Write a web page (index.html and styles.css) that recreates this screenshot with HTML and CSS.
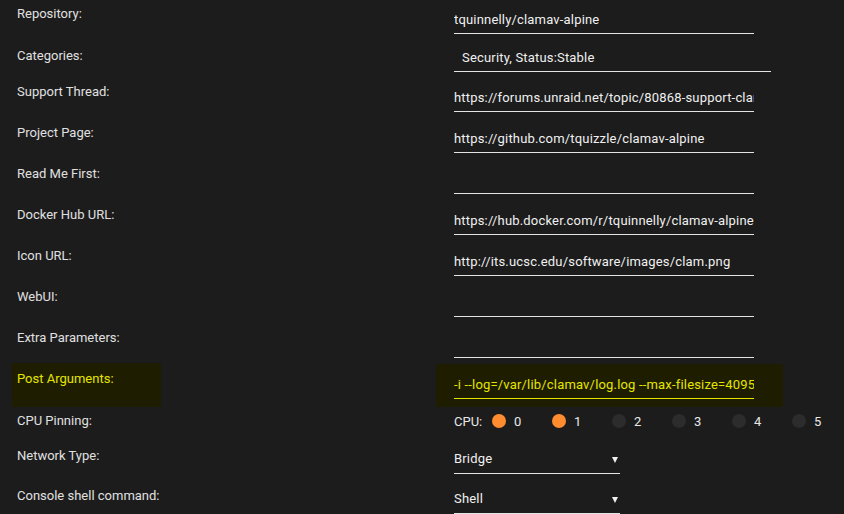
FILE: index.html
```html
<!DOCTYPE html>
<html>
<head>
<meta charset="utf-8">
<link rel="stylesheet" href="styles.css">
</head>
<body>
<div class="form">
  <div class="row row-repo">
    <div class="label">Repository:</div>
    <div class="field"><input class="text" type="text" value="tquinnelly/clamav-alpine"></div>
  </div>
  <div class="row row-cat">
    <div class="label">Categories:</div>
    <div class="field"><input class="text wide" type="text" value="Security, Status:Stable"></div>
  </div>
  <div class="row">
    <div class="label">Support Thread:</div>
    <div class="field"><input class="text" type="text" value="https://forums.unraid.net/topic/80868-support-clamav-alpine/"></div>
  </div>
  <div class="row">
    <div class="label">Project Page:</div>
    <div class="field"><input class="text" type="text" value="https://github.com/tquizzle/clamav-alpine"></div>
  </div>
  <div class="row">
    <div class="label">Read Me First:</div>
    <div class="field"><input class="text" type="text" value=""></div>
  </div>
  <div class="row">
    <div class="label">Docker Hub URL:</div>
    <div class="field"><input class="text" type="text" value="https://hub.docker.com/r/tquinnelly/clamav-alpine"></div>
  </div>
  <div class="row">
    <div class="label">Icon URL:</div>
    <div class="field"><input class="text" type="text" value="http://its.ucsc.edu/software/images/clam.png"></div>
  </div>
  <div class="row">
    <div class="label">WebUI:</div>
    <div class="field"><input class="text" type="text" value=""></div>
  </div>
  <div class="row">
    <div class="label">Extra Parameters:</div>
    <div class="field"><input class="text" type="text" value=""></div>
  </div>
  <div class="row row-hl">
    <div class="label">Post Arguments:</div>
    <div class="field"><input class="text" type="text" value="-i --log=/var/lib/clamav/log.log --max-filesize=4095M --max-scansize=4095M"></div>
  </div>
  <div class="row row-cpu">
    <div class="label">CPU Pinning:</div>
    <div class="field">
      <div class="cpus">
        <span class="cpu-title">CPU:</span>
        <span class="cpu"><span class="dot on"></span><span class="num">0</span></span>
        <span class="cpu"><span class="dot on"></span><span class="num">1</span></span>
        <span class="cpu"><span class="dot"></span><span class="num">2</span></span>
        <span class="cpu"><span class="dot"></span><span class="num">3</span></span>
        <span class="cpu"><span class="dot"></span><span class="num">4</span></span>
        <span class="cpu"><span class="dot"></span><span class="num">5</span></span>
      </div>
    </div>
  </div>
  <div class="row row-sel">
    <div class="label">Network Type:</div>
    <div class="field"><div class="select"><span>Bridge</span><span class="arrow"></span></div></div>
  </div>
  <div class="row row-sel">
    <div class="label">Console shell command:</div>
    <div class="field"><div class="select"><span>Shell</span><span class="arrow"></span></div></div>
  </div>
</div>
</body>
</html>
```

FILE: styles.css
```css
html, body {
  margin: 0;
  padding: 0;
  background: #1c1c1c;
  overflow: hidden;
}
body {
  font-family: Roboto, "Noto Sans", sans-serif;
  font-size: 13px;
  color: #e0e0e0;
}
.form {
  padding-left: 12px;
  margin-top: -1px;
}
.row {
  display: grid;
  grid-template-columns: 149px 347px;
  column-gap: 275px;
  height: 41px;
}
.row-repo { height: 38px; }
.row-cat { height: 40px; }
.label {
  box-sizing: border-box;
  padding: 7px 5px 0;
  line-height: 16px;
  white-space: nowrap;
}
.row-cat .label { padding-top: 11px; }
.field {
  box-sizing: border-box;
  padding-left: 18px;
  overflow: visible;
}
.text {
  display: block;
  box-sizing: border-box;
  width: 300px;
  height: 24px;
  margin: 11px 0 0;
  padding: 0 0 4px;
  border: 0;
  border-bottom: 1px solid #e4e4e4;
  background: transparent;
  color: #f0f0f0;
  font: inherit;
  font-size: 13px;
  letter-spacing: 0.18px;
  outline: none;
}
.text.wide {
  width: 317px;
  padding-left: 8px;
}
.row-hl .label {
  background: #1f1d00;
  color: #e5e500;
  height: 44px;
  margin-top: -1px;
  padding-top: 8px;
}
.row-hl .field {
  background: #1f1d00;
}
.row-hl .text {
  color: #e5e500;
  border-bottom-color: #e5e500;
}
.row-cpu { height: 36px; }
.row-cpu .label { padding-top: 8px; }
.cpus {
  display: flex;
  align-items: center;
  height: 14px;
  margin-top: 9px;
  color: #e8e8e8;
  width: max-content;
}
.cpu-title {
  flex: 0 0 38px;
}
.cpu {
  display: flex;
  align-items: center;
  flex: 0 0 60px;
  gap: 8px;
}
.dot {
  flex: 0 0 14px;
  height: 14px;
  border-radius: 50%;
  background: #2c2c2c;
}
.dot.on {
  background: #ff8c2f;
}
.row-sel { height: 40px; }
.select {
  box-sizing: border-box;
  width: 166px;
  height: 24px;
  margin-top: 9px;
  padding-top: 1px;
  border-bottom: 1px solid #e4e4e4;
  display: flex;
  justify-content: space-between;
  color: #f0f0f0;
  line-height: 16px;
  letter-spacing: 0.18px;
}
.arrow {
  width: 0;
  height: 0;
  margin: 6px 2px 0 0;
  border-left: 3px solid transparent;
  border-right: 3px solid transparent;
  border-top: 6px solid #f0f0f0;
}
```
